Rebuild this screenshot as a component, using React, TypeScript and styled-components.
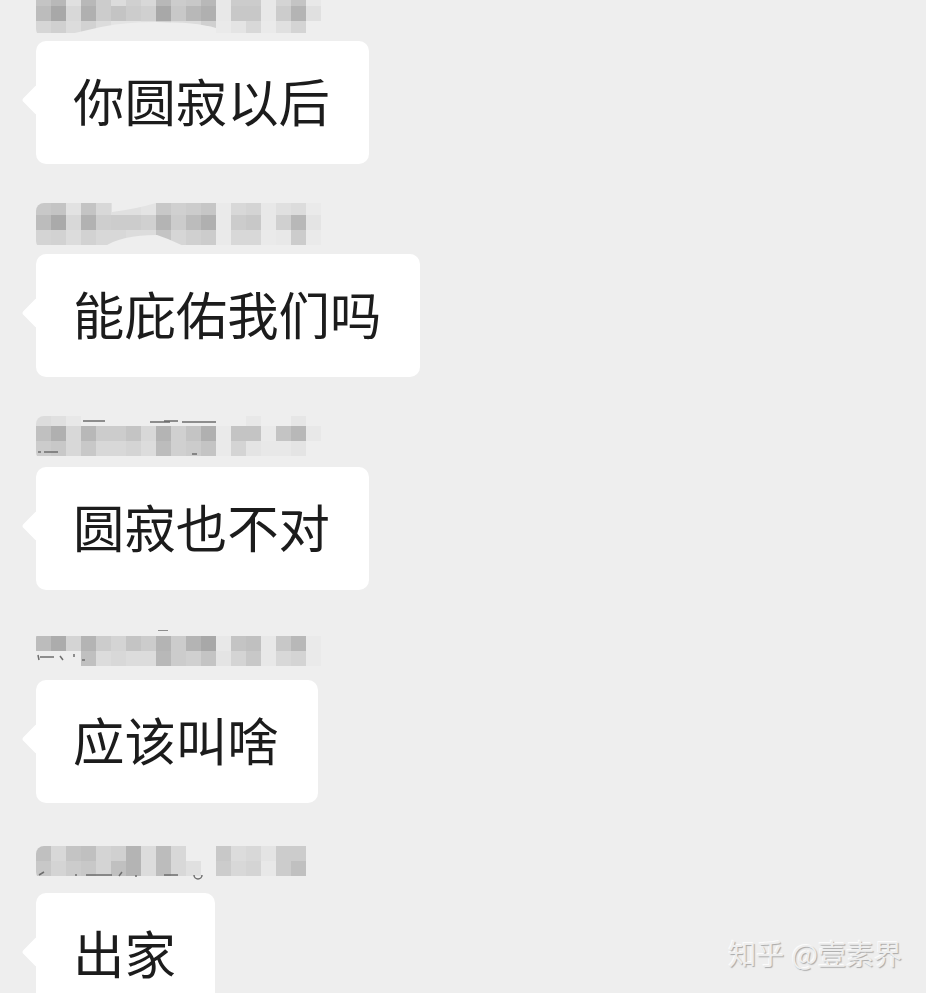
import React from 'react';
import styled, { createGlobalStyle } from 'styled-components';

const GlobalStyle = createGlobalStyle`
  html, body {
    margin: 0;
    padding: 0;
    background: #eeeeee;
  }
`;

const Page = styled.div`
  position: relative;
  width: 926px;
  height: 993px;
  overflow: hidden;
  background: #eeeeee;
  font-family: "Noto Sans CJK SC", "Noto Sans", sans-serif;
`;

const MessageList = styled.div`
  display: flex;
  flex-direction: column;
  margin-top: -21px;
`;

const Message = styled.div`
  flex: none;
  height: 213px;
  box-sizing: border-box;
  padding: 0 0 28px 36px;
  display: flex;
  flex-direction: column;
  justify-content: flex-end;
  align-items: flex-start;
`;

const Mosaic = styled.svg<{ $gap: number }>`
  display: block;
  flex: none;
  margin-bottom: ${(p) => p.$gap - 4}px;
  border-radius: 8px 0 0 8px;
  filter: blur(0.7px);
`;

const Bubble = styled.div`
  position: relative;
  flex: none;
  height: 123px;
  box-sizing: border-box;
  padding: 0 39px 5px 37px;
  display: flex;
  align-items: center;
  background: #ffffff;
  border-radius: 10px;
  color: #1c1c1c;
  font-size: 51.4px;
  line-height: 1;
  white-space: nowrap;

  &::before {
    content: '';
    position: absolute;
    left: -10px;
    top: 50%;
    width: 22px;
    height: 22px;
    margin-top: -14px;
    background: #ffffff;
    border-radius: 3px;
    transform: rotate(45deg);
  }
`;

const BubbleText = styled.span`
  position: relative;
`;

const Watermark = styled.div`
  position: absolute;
  right: 24px;
  bottom: 26px;
  color: #eeeeee;
  font-size: 28px;
  line-height: 1;
  white-space: nowrap;
  word-spacing: 1px;
  text-shadow: 1px 1px 1px #a8a8a8, -1px -1px 0 #fbfbfb;
`;

type MosaicRow = { height: number; cells: string };

type ChatMessage = {
  text: string;
  gap: number;
  rows: MosaicRow[];
  scraps?: string;
  cuts?: string;
};

const CELL = 15;

// hex grey per cell, "--" leaves the cell empty
const messages: ChatMessage[] = [
  {
    text: '你圆寂以后',
    gap: 8,
    cuts: 'M30 44L65 36Q90 31 120 31Q160 31 180 37L180 44Z',
    rows: [
      { height: 15, cells: 'c4 b8 e0 b8 cc dc d0 d8 b8 cc c8 b8 e8 cc cc e8 d4 c4 e8' },
      { height: 15, cells: 'bc a8 d8 b0 cc c4 cc d0 a8 c8 b8 b0 e8 c8 c8 e8 cc b4 e0' },
      { height: 12, cells: 'd6 d0 dc d2 dc e4 e4 e0 d0 dc dc d0 ea e4 d8 ea e0 d4 ee' },
    ],
  },
  {
    text: '能庇佑我们吗',
    gap: 9,
    cuts: 'M68 44Q85 32 121 32L132 36L150 44ZM76 0L76 9Q100 6 120 0Z',
    rows: [
      { height: 12, cells: 'c8 c4 e2 c4 d8 e0 e0 e4 c8 d0 cc c6 ea d8 d4 e8 e0 dc ea' },
      { height: 15, cells: 'bc aa d8 b2 ce cc cc d0 b4 cc bc b0 ea cc c8 e8 d0 b8 e4' },
      { height: 15, cells: 'd4 d2 dc d2 d8 d8 dc dc c4 d6 d0 cc ea d8 d8 ea e8 cc ea' },
    ],
  },
  {
    text: '圆寂也不对',
    gap: 11,
    scraps: 'M47 5h22M114 6h20M128 5h14M146 6h34M2 36h3M8 36h14M156 38h5',
    rows: [
      { height: 10, cells: 'dc e0 e8 ee ee ee ee ee ee ee ee ee ee ee e8 ee ee e6 ee' },
      { height: 15, cells: 'c0 b0 d8 b8 cc cc c4 d8 b4 d0 c4 b0 ea c4 c4 ea c4 b8 e8' },
      { height: 15, cells: 'cc c8 d8 c8 d8 d8 d4 dc bc d0 cc c4 ea d4 e4 e8 e8 e4 ee' },
    ],
  },
  {
    text: '应该叫啥',
    gap: 14,
    scraps: 'M2 25l1 5M4 27h14M24 26l3 4M38 24v3M46 30h3M122 0h10',
    rows: [
      { height: 6, cells: 'ee ee ee ee ee ee ee ee ee ee ee ee ee ee ee ee ee ee ee' },
      { height: 15, cells: 'bc ac d4 b4 cc d4 c4 cc b4 cc b4 a8 e8 c4 c0 e8 c8 b8 ea' },
      { height: 15, cells: '-- -- -- c0 dc d8 dc dc b8 cc d0 c4 e4 d4 c8 e8 d8 d4 ea' },
    ],
  },
  {
    text: '出家',
    gap: 17,
    scraps: 'M3 29l5-3M40 28v2M50 29h26M86 26l-3 4M100 29v2M128 29h14M158 29a3 3 0 0 0 8 0',
    rows: [
      { height: 15, cells: 'c0 d8 c4 c0 d4 d0 b4 dc bc d8 -- -- c8 dc d8 e4 cc cc' },
      { height: 15, cells: 'c8 d4 cc c8 d4 c0 b4 dc bc d8 e0 -- cc d8 d4 e8 cc c0' },
    ],
  },
];

const NameMosaic: React.FC<{ message: ChatMessage }> = ({ message }) => {
  const height = message.rows.reduce((sum, row) => sum + row.height, 0);
  let top = 0;

  return (
    <Mosaic $gap={message.gap} width={19 * CELL} height={height + 4}>
      {message.rows.map((row, r) => {
        const y = top;
        top += row.height;
        return row.cells.split(' ').map((cell, c) =>
          cell === '--' ? null : (
            <rect key={`${r}-${c}`} x={c * CELL} y={y} width={CELL} height={row.height} fill={`#${cell}${cell}${cell}`} />
          ),
        );
      })}
      {message.cuts && <path d={message.cuts} fill="#eeeeee" />}
      {message.scraps && <path d={message.scraps} fill="none" stroke="#6e6e6e" strokeWidth={1.5} />}
    </Mosaic>
  );
};

const App: React.FC = () => (
  <>
    <GlobalStyle />
    <Page>
      <MessageList>
        {messages.map((message) => (
          <Message key={message.text}>
            <NameMosaic message={message} />
            <Bubble>
              <BubbleText>{message.text}</BubbleText>
            </Bubble>
          </Message>
        ))}
      </MessageList>
      <Watermark>知乎 @壹素界</Watermark>
    </Page>
  </>
);

export default App;
